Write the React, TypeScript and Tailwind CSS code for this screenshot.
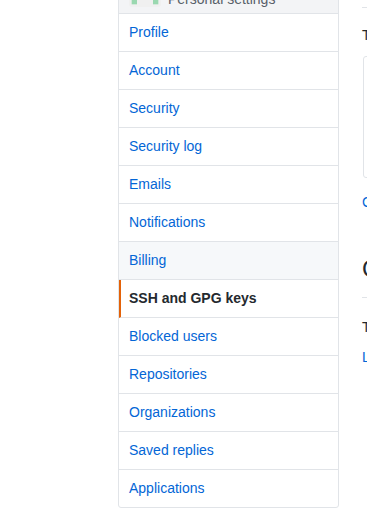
import React from "react";

const items = [
  "Profile",
  "Account",
  "Security",
  "Security log",
  "Emails",
  "Notifications",
  "Billing",
  "SSH and GPG keys",
  "Blocked users",
  "Repositories",
  "Organizations",
  "Saved replies",
  "Applications",
];

function Identicon() {
  const c = 32 / 6;
  const pad = (32 - c * 5) / 2;
  const cells: [number, number][] = [
    [0, 0], [4, 0], [1, 1], [3, 1], [2, 2], [0, 3], [4, 3], [0, 4], [4, 4],
  ];
  return (
    <svg width="32" height="32" viewBox="0 0 32 32" className="shrink-0 rounded-[3px]">
      <rect width="32" height="32" fill="#f0f0f0" />
      {cells.map(([x, y], i) => (
        <rect key={i} x={pad + x * c} y={pad + y * c} width={c} height={c} fill="#9ad8b0" />
      ))}
    </svg>
  );
}

export default function App() {
  return (
    <div
      className="w-[367px] h-[518px] overflow-hidden bg-white text-[14px] text-[#24292e]"
      style={{ fontFamily: '"Liberation Sans", Arial, sans-serif' }}
    >
      <div className="flex pl-[118px] w-[1000px]">
        <nav className="w-[221px] shrink-0 mt-[-22px] border border-[#e1e4e8] rounded-[3px] self-start">
          <div className="h-[35px] flex items-end gap-[7px] pl-[10px] pb-[6px] bg-[#f3f4f6] border-b border-[#e1e4e8]">
            <Identicon />
            <span className="leading-[14px] mb-[1px] text-[#586069]">Personal settings</span>
          </div>
          {items.map((name, i) => {
            const last = i === items.length - 1;
            if (name === "SSH and GPG keys") {
              return (
                <div
                  key={name}
                  className="py-[8px] leading-[21px] pl-[8px] border-l-2 border-l-[#e36209] border-b border-b-[#e1e4e8] font-bold text-[#24292e]"
                >
                  {name}
                </div>
              );
            }
            return (
              <div
                key={name}
                className={
                  "py-[8px] leading-[21px] pl-[10px] text-[#0366d6] " +
                  (last ? "" : "border-b border-[#e1e4e8] ") +
                  (name === "Billing" ? "bg-[#f6f8fa]" : "")
                }
              >
                {name}
              </div>
            );
          })}
        </nav>
        <main className="ml-[23px] w-[600px] shrink-0">
          <div className="mt-[-30px] h-[38px] border-b border-[#e1e4e8] text-[24px] leading-[30px]">
            SSH keys
          </div>
          <p className="mt-[17px] leading-[21px]">There are no SSH keys associated with your account.</p>
          <div className="mt-[10px] h-[122px] ml-[1px] border border-[#e1e4e8] rounded-[3px]" />
          <p className="mt-[14px] leading-[21px] text-[#0366d6]">
            Check out our guide to generating SSH keys or troubleshoot common SSH problems.
          </p>
          <div className="mt-[38px] h-[47px] border-b border-[#e1e4e8] text-[24px] leading-[36px]">
            GPG keys
          </div>
          <p className="mt-[19px] leading-[21px]">There are no GPG keys associated with your account.</p>
          <p className="mt-[9px] leading-[21px] text-[#0366d6]">
            Learn how to generate a GPG key and add it to your account.
          </p>
        </main>
      </div>
    </div>
  );
}
